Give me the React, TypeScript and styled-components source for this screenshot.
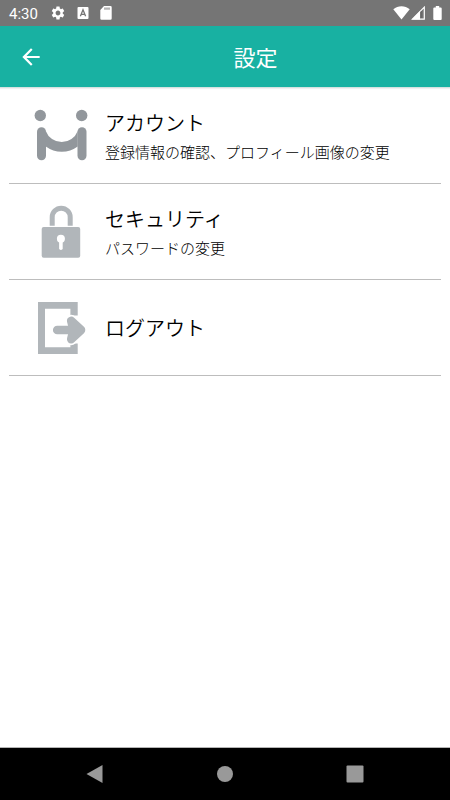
import React from "react";
import styled, { createGlobalStyle } from "styled-components";
import { MdArrowBack, MdSettings } from "react-icons/md";

const GlobalStyle = createGlobalStyle`
  * { box-sizing: border-box; }
  html, body { margin: 0; padding: 0; background: #fff; }
  body { font-family: Roboto, "Noto Sans CJK JP", sans-serif; }
  button { margin: 0; padding: 0; border: 0; background: none; font: inherit; color: inherit; cursor: pointer; }
  svg { display: block; flex: none; }
`;

const Screen = styled.div`
  display: flex;
  flex-direction: column;
  min-height: 100vh;
`;

const StatusBar = styled.div`
  display: flex;
  align-items: center;
  justify-content: space-between;
  height: 26px;
  padding: 0 8px 0 9px;
  background: #757575;
  color: #fff;
`;

const StatusGroup = styled.div<{ $gap: number }>`
  display: flex;
  align-items: center;
  gap: ${(p) => p.$gap}px;
`;

const Clock = styled.time`
  font: 400 15px/26px Roboto, sans-serif;
  padding: 1px 1px 0 0;
`;

const AppBar = styled.header`
  display: grid;
  grid-template-columns: 61px 1fr;
  align-items: center;
  height: 62px;
  background: #18b1a2;
  color: #fff;
  border-bottom: 1px solid #d5e2e0;
  box-shadow: 0 1px 1px rgba(0, 0, 0, 0.06);
`;

const BackButton = styled.button`
  display: flex;
  align-items: center;
  justify-content: center;
  height: 48px;
`;

const Title = styled.h1`
  margin: 0;
  padding-bottom: 2px;
  text-align: center;
  font: 400 22px/32px "Noto Sans CJK JP", sans-serif;
`;

const Menu = styled.ul`
  flex: 1;
  margin: 0;
  padding: 0 9px;
  list-style: none;
`;

const MenuItem = styled.li`
  border-bottom: 1px solid #bdbdbd;
`;

const MenuButton = styled.button`
  display: flex;
  align-items: center;
  gap: 15px;
  width: 100%;
  min-height: 95px;
  padding: 0 0 0 21px;
  text-align: left;
`;

const Labels = styled.span`
  display: flex;
  flex-direction: column;
  font-family: "Noto Sans CJK JP", sans-serif;
`;

const Label = styled.span`
  font-size: 20px;
  font-weight: 350;
  line-height: 32px;
  color: #000;
`;

const Description = styled.span`
  font-size: 15px;
  font-weight: 300;
  line-height: 25px;
  color: #000;
`;

const NavBar = styled.nav`
  display: flex;
  align-items: center;
  justify-content: space-between;
  height: 53px;
  padding: 0 71px;
  background: #000;
  border-top: 1px solid #b4b4b4;
`;

const NavButton = styled.button`
  display: flex;
  align-items: center;
  justify-content: center;
  width: 48px;
  height: 48px;
`;

const KeyboardIcon = () => (
  <svg width="12" height="12" viewBox="0 0 12 12" aria-hidden="true">
    <rect x="0.5" width="11" height="12" rx="1" fill="#fff" />
    <path d="M3.4 9.3 6 2.8l2.6 6.5M4.3 7.3h3.4" fill="none" stroke="#757575" strokeWidth="1.3" />
  </svg>
);

const SdCardIcon = () => (
  <svg width="12" height="14" viewBox="0 0 12 14" aria-hidden="true">
    <path d="M4 0h6.5A1.2 1.2 0 0 1 11.7 1.2V12.5A1.2 1.2 0 0 1 10.5 13.7H1.5A1.2 1.2 0 0 1 .3 12.5V4z" fill="#fff" />
    <path d="M5 1.5v2.2M7 1.5v2.2M9 1.5v2.2" stroke="#8c8c8c" strokeWidth="1.3" />
  </svg>
);

const WifiIcon = () => (
  <svg width="17" height="14" viewBox="0 0 17 14" aria-hidden="true">
    <path d="M.3 3.2C5-.8 12-.8 16.7 3.2L8.5 13.5z" fill="#fff" />
  </svg>
);

const SignalIcon = () => (
  <svg width="14" height="14" viewBox="0 0 14 14" aria-hidden="true">
    <path d="M13.3 1.2V13.2H1.3z" fill="none" stroke="#fff" strokeWidth="1.2" />
    <path d="M9 5v8.5H.8z" fill="#fff" />
    <path d="M10.5 5v7" stroke="#666" strokeWidth="1.4" />
  </svg>
);

const BatteryIcon = () => (
  <svg width="9" height="14" viewBox="0 0 9 14" aria-hidden="true">
    <path d="M2.8 0h3.4v1.5h1.5a1 1 0 0 1 1 1V13a1 1 0 0 1-1 1H1.3a1 1 0 0 1-1-1V2.5a1 1 0 0 1 1-1h1.5z" fill="#fff" />
  </svg>
);

const AccountIcon = () => (
  <svg width="60" height="59" viewBox="0 0 60 59" fill="#92979c" aria-hidden="true">
    <circle cx="10.3" cy="9.5" r="5.7" />
    <circle cx="51.7" cy="9.5" r="5.7" />
    <rect x="7" y="21.3" width="9" height="33" rx="4.5" />
    <rect x="47.5" y="21.3" width="9" height="33" rx="4.5" />
    <path d="M15.8 25A17 17 0 0 0 47.7 25V40.5A27 27 0 0 1 15.8 40.5Z" />
  </svg>
);

const LockIcon = () => (
  <svg width="60" height="59" viewBox="0 0 60 59" aria-hidden="true">
    <path d="M22.2 23.8V15.2a9 9 0 0 1 18 0v8.6" fill="none" stroke="#b1b6ba" strokeWidth="5" />
    <rect x="11.7" y="25" width="38.5" height="30.7" rx="2" fill="#b1b6ba" />
    <circle cx="30.9" cy="36.8" r="4" fill="#fff" />
    <path d="M30.9 38v8.3" stroke="#fff" strokeWidth="3.6" strokeLinecap="round" />
  </svg>
);

const ARROW = "M27.2 32H46M41.2 22.8L51 32L41.2 41.2L43.5 32Z";

const LogoutIcon = () => (
  <svg width="60" height="59" viewBox="0 0 60 59" fill="none" strokeLinecap="round" strokeLinejoin="round" aria-hidden="true">
    <path d="M8 4H47.7V17.5H40.4V10.8H15V49.2H40.4V45.5H47.7V56H8Z" fill="#b1b6ba" />
    <path d={ARROW} stroke="#fff" strokeWidth="12" />
    <path d={ARROW} stroke="#b1b6ba" strokeWidth="8.6" />
  </svg>
);

const items = [
  { label: "アカウント", description: "登録情報の確認、プロフィール画像の変更", Icon: AccountIcon },
  { label: "セキュリティ", description: "パスワードの変更", Icon: LockIcon },
  { label: "ログアウト", description: "", Icon: LogoutIcon },
];

export default function App() {
  return (
    <>
      <GlobalStyle />
      <Screen>
        <StatusBar>
          <StatusGroup $gap={11}>
            <Clock>4:30</Clock>
            <MdSettings size={16} aria-hidden="true" />
            <KeyboardIcon />
            <SdCardIcon />
          </StatusGroup>
          <StatusGroup $gap={8}>
            <StatusGroup $gap={1}>
              <WifiIcon />
              <SignalIcon />
            </StatusGroup>
            <BatteryIcon />
          </StatusGroup>
        </StatusBar>
        <AppBar>
          <BackButton aria-label="戻る">
            <MdArrowBack size={26} aria-hidden="true" />
          </BackButton>
          <Title>設定</Title>
        </AppBar>
        <Menu>
          {items.map(({ label, description, Icon }) => (
            <MenuItem key={label}>
              <MenuButton>
                <Icon />
                <Labels>
                  <Label>{label}</Label>
                  {description && <Description>{description}</Description>}
                </Labels>
              </MenuButton>
            </MenuItem>
          ))}
        </Menu>
        <NavBar>
          <NavButton aria-label="戻る">
            <svg width="18" height="18" viewBox="0 0 18 18" aria-hidden="true">
              <path d="M16.5 0v18L.5 9z" fill="#999" />
            </svg>
          </NavButton>
          <NavButton aria-label="ホーム">
            <svg width="18" height="18" viewBox="0 0 18 18" aria-hidden="true">
              <circle cx="9" cy="9" r="8" fill="#999" />
            </svg>
          </NavButton>
          <NavButton aria-label="履歴">
            <svg width="18" height="18" viewBox="0 0 18 18" aria-hidden="true">
              <rect x="0.5" y="0.5" width="17" height="17" rx="1" fill="#999" />
            </svg>
          </NavButton>
        </NavBar>
      </Screen>
    </>
  );
}
